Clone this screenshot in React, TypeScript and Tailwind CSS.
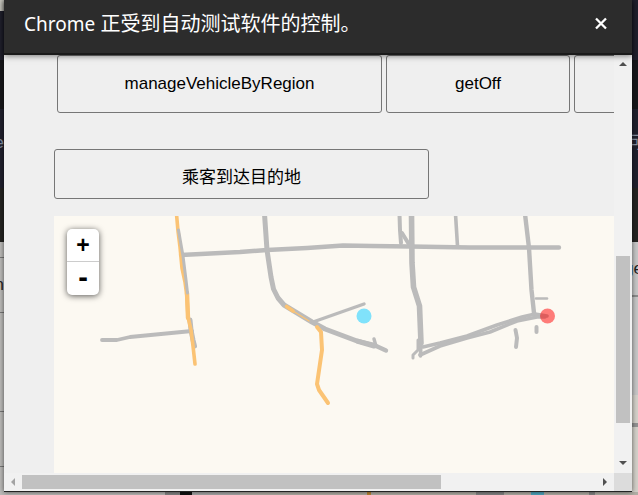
import React from "react";

const ROAD = "#bbbbbb";
const BUSY = "#fbc374";

type Road = { d: string; w: number; busy?: boolean };

const roads: Road[] = [
  { d: "M102 340 L117 340 L130 337 L192 331", w: 3.8 },
  { d: "M190 320 L191 330 L193 340 L194.5 346", w: 5 },
  { d: "M181 255 L240 252 L267 250 L307 248 L343 245.5 L372 246 L410 246.5 L470 247.5 L559 247.5", w: 4.4 },
  { d: "M264.5 214 L267 250 L271 277 L273.5 289 L278 298 L284 305 L312 322 L325 329 L357 341 L374 346", w: 5 },
  { d: "M357 341 L374 345 L386 350.5", w: 4.4 },
  { d: "M374 339 L376 346", w: 3.4 },
  { d: "M313 322 L364 304", w: 3.4 },
  { d: "M399.5 214 L400 230 L401 243", w: 4 },
  { d: "M402 233 L410 246", w: 4 },
  { d: "M411.5 214 L412 263 L413.5 287 L419.5 306 L421 343", w: 5.6 },
  { d: "M421 340 L420.5 356", w: 3.6 },
  { d: "M418 340 L418 350 L413 355 L413 358", w: 3 },
  { d: "M455.5 214 L457.5 246", w: 3.6 },
  { d: "M525 214 L529 248 L531.5 290 L534 313", w: 4.4 },
  { d: "M536 298.5 L547 298.5", w: 2.6 },
  { d: "M423 347 L440 343 L467 336 L497 325 L522 317 L535 314 L547 316", w: 3.6 },
  { d: "M420 355 L440 346 L467 338 L490 332 L517 321 L537 317 L545 317", w: 3.6 },
  { d: "M515.5 330 L517 338 L516 347", w: 4 },
  { d: "M536.5 327 L536.5 332", w: 4 },
  { d: "M176.5 214 L178 231 L180 247 L182 268 L185 282 L187 297 L188 317 L191 330 L193 346 L195 364", w: 3.6, busy: true },
  { d: "M187 293 L188 318", w: 4.4, busy: true },
  { d: "M178.5 230 L183 256 L186 280 L187.5 293", w: 3 },
  { d: "M286.5 306.5 L293 311", w: 3.6, busy: true },
  { d: "M293 311 L309 321", w: 1.4, busy: true },
  { d: "M317 327 L321 332 L322 350 L317 384 L319 390 L328 403", w: 4, busy: true },
];

function RoadMap() {
  return (
    <svg className="block h-[257px] w-[560px] shrink-0" viewBox="54 216 560 257" role="img" aria-label="Map">
      {roads.map((r) => (
        <path
          key={r.d}
          d={r.d}
          fill="none"
          stroke={r.busy ? BUSY : ROAD}
          strokeWidth={r.w}
          strokeLinecap="round"
          strokeLinejoin="round"
        />
      ))}
      <circle cx="364" cy="316" r="7.5" fill="#80e2fb" />
      <circle cx="547.5" cy="316" r="7.5" fill="#ff0000" fillOpacity="0.5" />
    </svg>
  );
}

function Arrow({ points, fill = "#505050" }: { points: string; fill?: string }) {
  return (
    <svg width="18" height="18" viewBox="0 0 18 18" className="shrink-0" aria-hidden="true">
      <polygon points={points} fill={fill} />
    </svg>
  );
}

/* Slivers of the window behind this one, seen along its edges. */
function LeftSliver() {
  return (
    <div className="flex w-1 shrink-0 flex-col overflow-hidden bg-[#bbbab8] text-[17px] leading-5" aria-hidden="true">
      <div className="h-[11px] bg-[#c9c8c0]" />
      <div className="h-[49px] bg-[#20202d]" />
      <div className="h-[49px] bg-[#17171a]" />
      <div className="flex h-[79px] items-center justify-end bg-[#20202d] pb-3 text-[#8790a0]">e</div>
      <div className="h-[54px] bg-[#242321]" />
      <div className="h-4 border-b border-[#777777]" />
      <div className="flex h-[55px] items-center justify-end border-b border-[#777777] text-[#222222]">n</div>
      <div className="h-[99px] border-b border-[#777777]" />
      <div className="h-[55px] border-b border-[#777777]" />
    </div>
  );
}

function RightSliver() {
  return (
    <div className="flex w-[6px] shrink-0 flex-col overflow-hidden bg-[#d3d0c9] text-[17px] leading-5" aria-hidden="true">
      <div className="h-[60px] bg-[#20202d]" />
      <div className="h-[49px] bg-[#17171a]" />
      <div className="flex h-[79px] items-center bg-[#20202d] pb-3 text-[#8790a0]">
        <span className="-ml-1 shrink-0">可</span>
      </div>
      <div className="h-[54px] bg-[#242321]" />
      <div className="flex h-[55px] items-center border-b-2 border-[#8c8c8c] bg-[#c6c6c6] text-[#222222]">
        <span className="-ml-2 shrink-0">ge</span>
      </div>
      <div className="h-[98px] bg-[#c6c6c6]" />
      <div className="h-8 border-b-4 border-[#929292]" />
    </div>
  );
}

function BottomSliver() {
  return (
    <div className="flex h-[3px] bg-[#b1aea5]" aria-hidden="true">
      <div className="w-[165px] bg-[#bbbab8]" />
      <div className="w-[15px] bg-[#858585]" />
      <div className="w-3 bg-[#121212]" />
      <div className="w-12 bg-[#a9a9a9]" />
      <div className="ml-[127px] w-1 bg-[#b98534]" />
      <div className="ml-[105px] w-7 bg-[#858585]" />
      <div className="ml-[27px] w-[13px] bg-[#4ea5bd]" />
      <div className="ml-[45px] w-[6px] bg-[#858585]" />
    </div>
  );
}

export default function App() {
  const button =
    "shrink-0 rounded-[3px] border border-[#767676] bg-[#efefef] text-[17px] leading-5 text-black";
  return (
    <div className="flex min-h-screen flex-col bg-[#b1aea5] font-['Liberation_Sans','Noto_Sans_CJK_SC',sans-serif]">
      <div className="flex">
        <LeftSliver />
        <main className="z-10 flex min-w-0 flex-1 flex-col border-b border-[#222222] bg-[#efefef] shadow-[0_0_5px_rgba(0,0,0,0.6)]">
          <header className="z-10 flex h-[55px] items-center justify-between border-b-2 border-[#1a1a1a] bg-[#2c2c2c] pr-6 pb-[6px] pl-5 shadow-[0_1px_6px_rgba(0,0,0,0.5)]">
            <p className="font-['Noto_Sans','Noto_Sans_CJK_SC',sans-serif] text-[20px] leading-6 whitespace-nowrap text-white">
              <span className="text-[19px]">Chrome</span> 正受到自动测试软件的控制。
            </p>
            <button type="button" aria-label="Close" className="flex size-[14px] items-center justify-center">
              <svg width="14" height="14" viewBox="0 0 14 14" aria-hidden="true">
                <path d="M2 1.5 L12 11.5 M12 1.5 L2 11.5" stroke="#fff" strokeWidth="2.3" />
              </svg>
            </button>
          </header>
          <div className="flex">
            <div className="min-w-0 flex-1 overflow-hidden pl-[50px]">
              <div className="flex gap-1 pl-[3px]">
                <button type="button" className={button + " h-[58px] w-[325px]"}>manageVehicleByRegion</button>
                <button type="button" className={button + " h-[58px] w-[184px]"}>getOff</button>
                <button type="button" aria-label="More" className={button + " h-[58px] w-[184px]"} />
              </div>
              <button type="button" className={button + " mt-9 block h-[50px] w-[375px] pt-2"}>乘客到达目的地</button>
              <section className="relative mt-[17px] overflow-hidden bg-[#fcf9f2]">
                <RoadMap />
                <div className="absolute top-[13px] left-[13px] flex w-8 flex-col overflow-hidden rounded-[5px] bg-white shadow-[0_1px_6px_rgba(0,0,0,0.65)]">
                  <button type="button" className="h-[33px] border-b border-[#cccccc] text-[23px] leading-8 font-bold">+</button>
                  <button type="button" className="h-[33px] pb-1 text-[29px] leading-7 font-bold">-</button>
                </div>
              </section>
            </div>
            <div className="flex w-[18px] shrink-0 flex-col bg-[#f1f1f1]">
              <Arrow points="9,7 13,11 5,11" />
              <div className="mx-[2px] mt-[183px] h-[167px] bg-[#c1c1c1]" />
              <div className="flex-1" />
              <Arrow points="5,6 13,6 9,10" />
            </div>
          </div>
          <div className="flex h-[18px] items-center bg-[#f1f1f1]">
            <Arrow points="7,9 11,5 11,13" fill="#a3a3a3" />
            <div className="flex flex-1">
              <div className="h-[14px] w-[73%] bg-[#c1c1c1]" />
            </div>
            <Arrow points="7,5 11,9 7,13" />
            <div className="size-[18px] bg-[#dcdcdc]" />
          </div>
        </main>
        <RightSliver />
      </div>
      <BottomSliver />
    </div>
  );
}
